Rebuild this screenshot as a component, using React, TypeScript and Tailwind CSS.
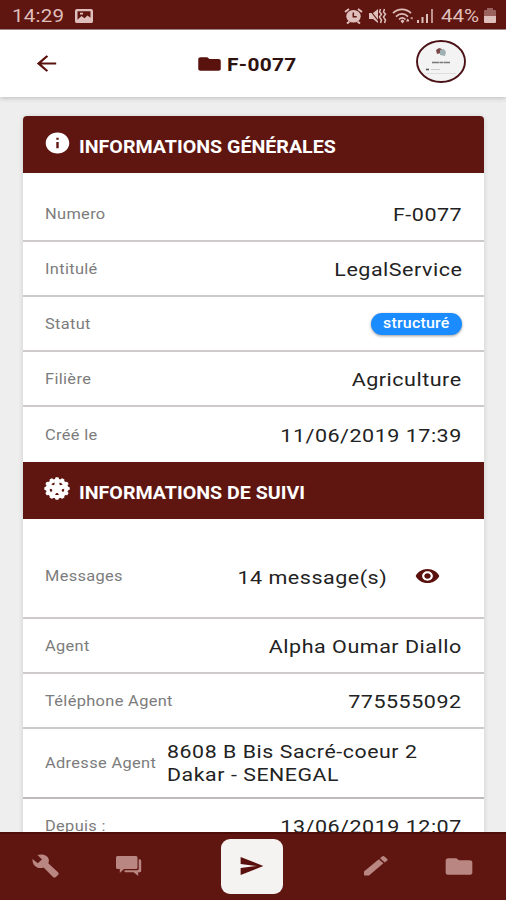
import type { ReactNode } from "react";
import { IoMdArrowBack, IoMdEye, IoMdInformationCircle, IoMdSend } from "react-icons/io";
import { MdFolder } from "react-icons/md";

function StatusBar() {
  return (
    <div className="flex h-[30px] shrink-0 items-center border-b border-[#a98d89] bg-[#5f1611] pt-[2px] pr-[10px] pl-3 text-[#dfbfbb]">
      <span className="origin-left scale-x-[1.14] text-[18px] leading-none tracking-[0.2px]">14:29</span>
      <svg className="ml-[17px] h-[14px] w-[18px]" viewBox="0 0 18 15" preserveAspectRatio="none">
        <path
          fill="currentColor"
          fillRule="evenodd"
          d="M2 0h14a2 2 0 0 1 2 2v11a2 2 0 0 1-2 2H2a2 2 0 0 1-2-2V2a2 2 0 0 1 2-2zM2.5 2.5v9l4-4 3 2.5 3-3 3 2.5v-7zM5 4h3v2H5z"
        />
      </svg>
      <div className="ml-auto flex items-center">
        <svg className="h-[16px] w-[19px]" viewBox="0 0 19 16">
          <ellipse cx="9.5" cy="8.3" rx="7.2" ry="6.3" fill="currentColor" />
          <path d="M1 4l4-3M18 4l-4-3M3 15.5l2.5-2M16 15.5l-2.5-2" stroke="currentColor" strokeWidth="2" />
          <path d="M9.3 4.5v4.3h3.4" fill="none" stroke="#5f1611" strokeWidth="1.5" />
        </svg>
        <svg className="ml-[5px] h-[16px] w-[19px]" viewBox="0 0 19 16">
          <path fill="currentColor" d="M1 5h4l5-4v14l-5-4H1z" />
          <path d="M1 1l11 14" stroke="#5f1611" strokeWidth="1.2" />
          <path d="M12.5 1l-1 3 2 2-2 3 2 3-1 3M16.5 1l-1 3 2 2-2 3 2 3-1 3" fill="none" stroke="currentColor" strokeWidth="1.5" />
        </svg>
        <svg className="ml-[5px] h-[16px] w-[21px]" viewBox="0 0 21 16">
          <g fill="none" stroke="currentColor" strokeWidth="1.7">
            <path d="M1 5.2c5-5 13-5 18 0M4 8.6c3.5-3.6 8.5-3.6 12 0M7 11.5c2-2 4.5-2 6.5 0" />
          </g>
          <path fill="currentColor" d="M8.5 13l2-1.500 2 1.500-2 2.500zM14 13.500h3v-1.500l-1.500-1.500zM18 10l2.500-1v2.500z" />
        </svg>
        <svg className="ml-[4px] h-[15px] w-[17px]" viewBox="0 0 17 15">
          <path d="M1 15v-3M5.5 15V9M10 15V6" stroke="currentColor" strokeWidth="2" />
          <path d="M15 15V1" stroke="currentColor" strokeWidth="2" opacity=".75" />
        </svg>
        <span className="ml-[7px] w-[39px] text-[18px] leading-none whitespace-nowrap">
          <span className="inline-block origin-left scale-x-[1.14]">44%</span>
        </span>
        <svg className="ml-[4px] h-[15px] w-[12px]" viewBox="0 0 12 15">
          <path fill="currentColor" opacity=".45" d="M3 0h6v2h2q1 0 1 1v5H0V3q0-1 1-1h2z" />
          <path fill="currentColor" d="M0 8h12v6q0 1-1 1H1q-1 0-1-1z" />
        </svg>
      </div>
    </div>
  );
}

function Header() {
  return (
    <header className="z-10 flex h-[67px] shrink-0 items-center bg-white pr-[40px] pl-[32px] text-[#5a120e] shadow-[0_1px_5px_rgba(0,0,0,0.22)]">
      <IoMdArrowBack preserveAspectRatio="none" className="h-[25px] w-[29px]" />
      <div className="ml-[135px] flex items-center">
        <MdFolder preserveAspectRatio="none" className="h-[20px] w-[27px]" />
        <h1 className="mt-[3px] ml-[4px] origin-left scale-x-[1.16] text-[18px] leading-none font-bold tracking-[0.3px] text-[#2f1210]">
          F-0077
        </h1>
      </div>
      <svg className="-mt-1 ml-auto h-[43px] w-[50px]" viewBox="0 0 50 43">
        <ellipse cx="25" cy="21.5" rx="24" ry="20.5" fill="#f3f3f3" stroke="#4a1216" strokeWidth="1.9" />
        <path d="M20 10l3-2 3 1-1 4-4 1z" fill="#7b4a48" />
        <path d="M24 10l4-1 2 3-1 4-5-1z" fill="#9fb0b0" />
        <path d="M16 22.5h18" stroke="#777" strokeWidth="1.4" strokeDasharray="7 .5 4 .5" />
        <path d="M10 29.5h3" stroke="#555" strokeWidth="1.6" />
        <path d="M15 29.5h9" stroke="#ccc" strokeWidth="1" />
        <path d="M10 33.5h30" stroke="#ddd" strokeWidth="1" />
      </svg>
    </header>
  );
}

function GearIcon() {
  const teeth = Array.from({ length: 12 }, (_, i) => i * 30);
  const holes = Array.from({ length: 5 }, (_, i) => i * 72 + 36);
  return (
    <svg className="h-[23px] w-[26px]" viewBox="0 0 24 24" preserveAspectRatio="none">
      <circle cx="12" cy="12" r="10.3" fill="#fff" />
      {teeth.map((a) => (
        <rect key={a} x="10.3" y="0.3" width="3.4" height="4" rx="1" fill="#fff" transform={`rotate(${a} 12 12)`} />
      ))}
      {holes.map((a) => (
        <path key={a} d="M10.1 5.6q1.9-1 3.800 0l-1.300 1.700h-1.200z" fill="#5f1611" transform={`rotate(${a} 12 12)`} />
      ))}
    </svg>
  );
}

function WrenchIcon() {
  return (
    <svg className="h-[24px] w-[27px]" viewBox="0 0 27 24" fill="currentColor">
      <path d="M5.500 1C10 -.5 16 1 16.800 5.500Q17.100 7.400 16.300 9.200L26 18.300Q27.300 19.700 26 21L23.900 22.900Q22.500 24 21 22.900L11.600 13.500C6 15.600 0 12 .5 5L5.700 9.200 10 5.400z" />
    </svg>
  );
}

function ChatIcon() {
  return (
    <svg className="h-[20px] w-[26px]" viewBox="0 0 26 20" fill="currentColor">
      <path d="M1.500 0h18.500q1.500 0 1.500 1.500v10q0 1.500-1.500 1.500H8l-4.200 4V13H1.500Q0 13 0 11.500v-10Q0 0 1.500 0z" />
      <path d="M22.700 3.200h1q1.500 0 1.500 1.500v10.200q0 1.300-1.300 1.300h-1.700V20l-4.500-3.800H9.500q-1 0-1-1v-1h12.700q1.500 0 1.500-1.500z" />
    </svg>
  );
}

function PencilIcon() {
  return (
    <svg className="h-[20px] w-[24px]" viewBox="0 0 24 20" fill="currentColor">
      <path d="M0 15.500L14.800 3.300l4.600 4L5 19.500H.7Q0 19.500 0 18.800z" />
      <path d="M16 2.300L18 .6q1.200-1 2.400 0l2.600 2.200q1.100 1 0 2L20.700 6.500z" />
    </svg>
  );
}

function SectionTitle({ icon, children }: { icon: ReactNode; children: ReactNode }) {
  return (
    <div className="flex h-[57px] items-center bg-[#5f1611] pl-[20px] text-white">
      <div className="mb-[4px] -ml-px flex w-[30px] justify-center">{icon}</div>
      <h2 className="mt-[4px] ml-[7px] origin-left scale-x-[1.09] text-[18px] leading-none font-bold whitespace-nowrap">
        {children}
      </h2>
    </div>
  );
}

function Label({ children }: { children: ReactNode }) {
  return (
    <span className="mt-[3px] inline-block origin-left scale-x-[1.13] text-[14.5px] leading-none tracking-[0.3px] whitespace-nowrap text-[#7c7c7c]">
      {children}
    </span>
  );
}

function Value({ children }: { children: ReactNode }) {
  return (
    <span className="mt-[3px] ml-auto origin-right scale-x-[1.15] text-[18.7px] leading-none tracking-[0.45px] whitespace-nowrap text-[#222]">
      {children}
    </span>
  );
}

function Row({ label, children }: { label: string; children: ReactNode }) {
  return (
    <div className="flex h-[55px] items-center border-b-2 border-[#cfcaca] px-[22px]">
      <Label>{label}</Label>
      {children}
    </div>
  );
}

export default function App() {
  return (
    <div className="flex h-[900px] w-[506px] flex-col overflow-hidden bg-[#eeeeee] font-['Roboto',sans-serif]">
      <StatusBar />
      <Header />

      <main className="min-h-0 flex-1 overflow-hidden pt-[19px] pr-[22px] pl-[23px]">
        <div className="overflow-hidden rounded-t-[4px] bg-white shadow-[0_1px_5px_rgba(0,0,0,0.15)]">
          <SectionTitle
            icon={<IoMdInformationCircle preserveAspectRatio="none" className="h-[26px] w-[29px]" />}
          >
            INFORMATIONS GÉNÉRALES
          </SectionTitle>
          <div className="pt-[14px]">
            <Row label="Numero"><Value>F-0077</Value></Row>
            <Row label="Intitulé"><Value>LegalService</Value></Row>
            <Row label="Statut">
              <span className="mt-px ml-auto flex h-[22px] w-[91px] items-center justify-center rounded-full bg-[#1a8cff] shadow-[0_1px_3px_rgba(0,0,0,0.4)]">
                <span className="mt-px scale-x-[1.1] text-[14.5px] leading-none font-medium tracking-[0.2px] text-white">structuré</span>
              </span>
            </Row>
            <Row label="Filière"><Value>Agriculture</Value></Row>
            <div className="flex h-[55px] items-center px-[22px]">
              <Label>Créé le</Label>
              <Value>11/06/2019 17:39</Value>
            </div>
          </div>

          <SectionTitle icon={<GearIcon />}>INFORMATIONS DE SUIVI</SectionTitle>
          <div className="flex h-[100px] items-center border-b-2 border-[#cfcaca] px-[22px] pt-[16px]">
            <Label>Messages</Label>
            <span className="mt-[5px] ml-auto origin-right scale-x-[1.15] text-[18.7px] leading-none tracking-[0.45px] text-[#222]">
              14 message(s)
            </span>
            <IoMdEye preserveAspectRatio="none" className="mr-[21px] ml-[27px] h-[24px] w-[27px] text-[#5a100c]" />
          </div>
          <Row label="Agent"><Value>Alpha Oumar Diallo</Value></Row>
          <Row label="Téléphone Agent"><Value>775555092</Value></Row>
          <div className="flex h-[70px] items-center border-b-2 border-[#bfbaba] px-[22px]">
            <div className="w-[122px]">
              <Label>Adresse Agent</Label>
            </div>
            <p className="mt-px origin-left scale-x-[1.14] text-[18.7px] leading-[23px] tracking-[0.5px] whitespace-nowrap text-[#222]">
              8608 B Bis Sacré-coeur 2
              <br />
              Dakar - SENEGAL
            </p>
          </div>
          <Row label="Depuis :"><Value>13/06/2019 12:07</Value></Row>
        </div>
      </main>

      <nav className="z-10 flex h-[68px] shrink-0 items-center border-t-2 border-[#4d0d09] bg-[#5f1611] pb-[2px] text-[#b98681]">
        <div className="flex w-[91px] justify-center">
          <WrenchIcon />
        </div>
        <div className="flex w-[75px] justify-center">
          <ChatIcon />
        </div>
        <div className="flex w-[172px] justify-center">
          <button className="flex h-[55px] w-[62px] items-center justify-center rounded-[9px] bg-[#f5f3f2] text-[#5a100c]">
            <IoMdSend preserveAspectRatio="none" className="h-[24px] w-[28px]" />
          </button>
        </div>
        <div className="flex w-[76px] justify-center">
          <PencilIcon />
        </div>
        <div className="flex w-[89px] justify-center">
          <MdFolder preserveAspectRatio="none" className="h-[25px] w-[32px]" />
        </div>
      </nav>
    </div>
  );
}
